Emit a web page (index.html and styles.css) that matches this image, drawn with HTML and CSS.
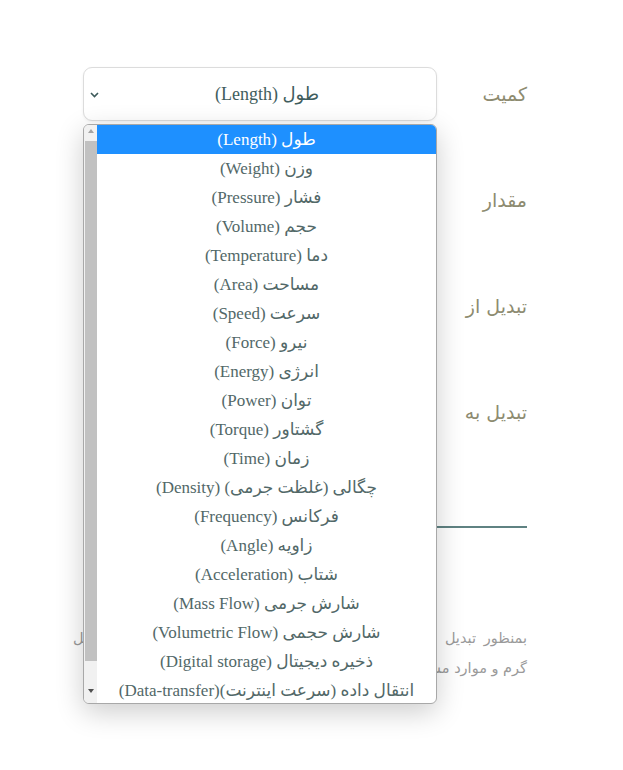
FILE: index.html
```html
<!DOCTYPE html>
<html lang="fa" dir="rtl">
<head>
<meta charset="utf-8">
<title>تبدیل واحد</title>
<link rel="stylesheet" href="styles.css">
</head>
<body>
<div class="page">
  <form class="converter">
    <div class="row">
      <label class="label">کمیت</label>
      <div class="field select-field">
        <span class="select-value">طول (Length)</span>
        <svg class="chevron" width="9" height="6" viewBox="0 0 9 6"><path d="M1 1 L4.5 4.5 L8 1" fill="none" stroke="#3d5a5a" stroke-width="1.6"/></svg>
      </div>
    </div>
    <div class="row">
      <label class="label">مقدار</label>
      <div class="field"></div>
    </div>
    <div class="row">
      <label class="label">تبدیل از</label>
      <div class="field"></div>
    </div>
    <div class="row">
      <label class="label">تبدیل به</label>
      <div class="field"></div>
    </div>
    <div class="divider"></div>
    <p class="note"><span class="note-line">بمنظور تبدیل واحدها، ابتدا کمیت مورد نظر را انتخاب کنید؛ مانند تبدیل</span><span class="note-line-last">گرم و موارد مشابه آن.</span></p>
  </form>

  <div class="dropdown">
    <div class="scrollbar">
      <span class="arrow up"></span>
      <span class="thumb"></span>
      <span class="arrow down"></span>
    </div>
    <ul class="options">
      <li class="option selected">طول (Length)</li>
      <li class="option">وزن (Weight)</li>
      <li class="option">فشار (Pressure)</li>
      <li class="option">حجم (Volume)</li>
      <li class="option">دما (Temperature)</li>
      <li class="option">مساحت (Area)</li>
      <li class="option">سرعت (Speed)</li>
      <li class="option">نیرو (Force)</li>
      <li class="option">انرژی (Energy)</li>
      <li class="option">توان (Power)</li>
      <li class="option">گشتاور (Torque)</li>
      <li class="option">زمان (Time)</li>
      <li class="option">چگالی (غلظت جرمی) (Density)</li>
      <li class="option">فرکانس (Frequency)</li>
      <li class="option">زاویه (Angle)</li>
      <li class="option">شتاب (Acceleration)</li>
      <li class="option">شارش جرمی (Mass Flow)</li>
      <li class="option">شارش حجمی (Volumetric Flow)</li>
      <li class="option">ذخیره دیجیتال (Digital storage)</li>
      <li class="option">انتقال داده (سرعت اینترنت)(Data-transfer)</li>
    </ul>
  </div>
</div>
</body>
</html>
```
FILE: styles.css
```css
html, body {
  margin: 0;
  padding: 0;
  background: #ffffff;
}

.page {
  position: relative;
  width: 623px;
  height: 770px;
  overflow: hidden;
  font-family: "DejaVu Sans", sans-serif;
}

.converter {
  padding: 67px 96px 0 83px;
}

.row {
  display: flex;
  align-items: center;
  height: 54px;
  margin-bottom: 52px;
}

.label {
  width: 90px;
  flex: none;
  font-size: 19px;
  color: #8d8b70;
  text-align: right;
}

.field {
  width: 354px;
  height: 54px;
  box-sizing: border-box;
  border: 1px solid #dcdcdc;
  border-radius: 9px;
  background: #fff;
}

.select-field {
  display: flex;
  align-items: center;
  justify-content: center;
  position: relative;
  padding-left: 14px;
  box-shadow: 0 1px 3px rgba(0,0,0,0.06);
}

.select-value {
  font-family: "Liberation Serif", "DejaVu Sans", serif;
  font-size: 18px;
  color: #3f5d5d;
}

.chevron {
  position: absolute;
  left: 6px;
  top: 24px;
}

.divider {
  height: 2px;
  background: #5f8282;
  margin-top: 87px;
}

.note {
  margin: 95px 0 0 -10px;
  font-size: 14.5px;
  line-height: 30px;
  color: #9a9a9a;
  text-align: right;
}

.note-line {
  display: block;
  white-space: nowrap;
  text-align: justify;
  text-align-last: justify;
}

.note-line-last {
  display: block;
}

.dropdown {
  position: absolute;
  left: 83px;
  top: 124px;
  width: 354px;
  height: 580px;
  box-sizing: border-box;
  border: 1px solid #a8a8a8;
  border-radius: 6px;
  background: #fff;
  box-shadow: 0 8px 28px rgba(0,0,0,0.2);
  display: flex;
  direction: ltr;
  overflow: hidden;
}

.scrollbar {
  width: 13px;
  flex: none;
  background: #f1f1f1;
  display: flex;
  flex-direction: column;
  align-items: center;
}

.arrow {
  display: block;
  width: 0;
  height: 0;
  border-left: 3.5px solid transparent;
  border-right: 3.5px solid transparent;
}

.arrow.up {
  border-bottom: 4px solid #a3a3a3;
  margin: 4px 0 8px;
}

.arrow.down {
  border-top: 4px solid #505050;
  margin-top: 28px;
}

.thumb {
  display: block;
  width: 12px;
  height: 520px;
  background: #c1c1c1;
}

.options {
  list-style: none;
  margin: 0;
  padding: 0;
  flex: 1;
  direction: rtl;
}

.option {
  height: 29px;
  line-height: 29px;
  text-align: center;
  font-family: "Liberation Serif", "DejaVu Sans", serif;
  font-size: 17px;
  color: #526868;
  white-space: nowrap;
}

.option.selected {
  background: #1e90ff;
  color: #ffffff;
}
```
